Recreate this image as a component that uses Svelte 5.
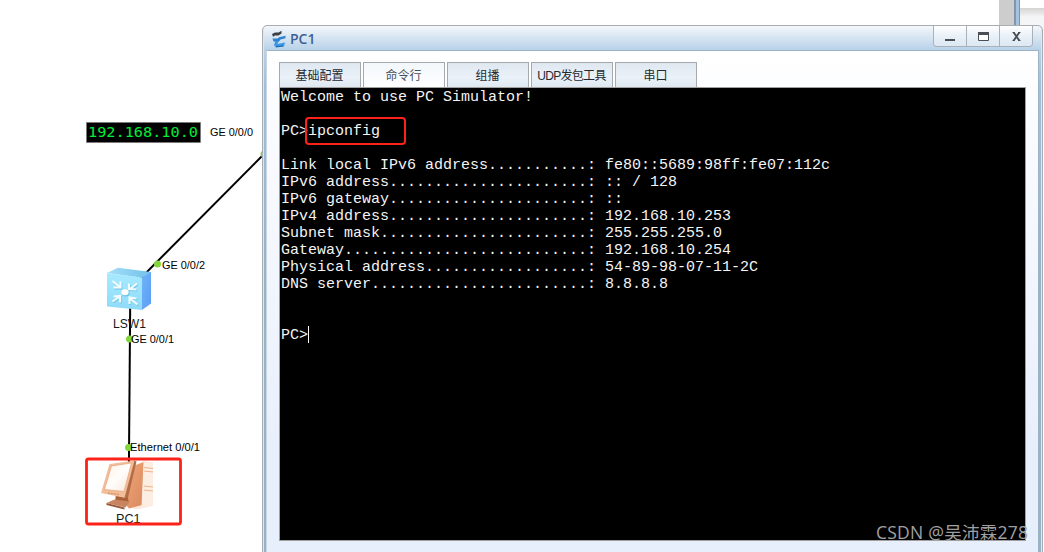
<script>
  const tabs = ['基础配置', '命令行', '组播', 'UDP发包工具', '串口']
  let active = 1

  const info = [
    ['Link local IPv6 address', 'fe80::5689:98ff:fe07:112c'],
    ['IPv6 address', ':: / 128'],
    ['IPv6 gateway', '::'],
    ['IPv4 address', '192.168.10.253'],
    ['Subnet mask', '255.255.255.0'],
    ['Gateway', '192.168.10.254'],
    ['Physical address', '54-89-98-07-11-2C'],
    ['DNS server', '8.8.8.8'],
  ]

  const ports = [
    { name: 'GE 0/0/0', x: 210, y: 136, w: 43, dot: [264, 154] },
    { name: 'GE 0/0/2', x: 162, y: 269, w: 43, dot: [157.5, 264] },
    { name: 'GE 0/0/1', x: 131, y: 343, w: 43, dot: [129.5, 339] },
    { name: 'Ethernet 0/0/1', x: 130, y: 451, w: 70, dot: [128.5, 447.5] },
  ]

  const arrows = 'M112.500 281l7.500 6M120.500 281.500v6h-7M137 283.500l-7 5.500M129 283.500v5.500l7.500.5M112.500 301.500l7-5M113.500 296.500l6.500-.500v6.500M137.500 304.500l-7.500-6M129.500 304v-6.500l7 1'

  const line = ([label, value]) => label.padEnd(34, '.') + ': ' + value
</script>

<div class="desktop">
  <svg class="topology" width="1044" height="552" viewBox="0 0 1044 552">
    <defs>
      <linearGradient id="front" x1="0" y1="0" x2="0" y2="1">
        <stop offset="0" stop-color="#a8eaff" />
        <stop offset="1" stop-color="#8edbf8" />
      </linearGradient>
      <linearGradient id="top" x1="0" y1="0" x2="1" y2="0">
        <stop offset="0" stop-color="#a5dff8" />
        <stop offset="1" stop-color="#6fc1ea" />
      </linearGradient>
      <linearGradient id="side" x1="0" y1="0" x2="1" y2="1">
        <stop offset="0" stop-color="#70b4f5" />
        <stop offset="1" stop-color="#5a9cf8" />
      </linearGradient>
      <linearGradient id="screen" x1="0" y1="0" x2="1" y2="1">
        <stop offset="0" stop-color="#fff1e5" />
        <stop offset=".5" stop-color="#fffdfb" />
        <stop offset="1" stop-color="#f8e6d8" />
      </linearGradient>
      <linearGradient id="tower" x1="0" y1="0" x2="1" y2="1">
        <stop offset="0" stop-color="#f0a678" />
        <stop offset="1" stop-color="#d98a5e" />
      </linearGradient>
    </defs>

    <g stroke="#000" stroke-width="2">
      <path d="M264 154 128 291" />
      <path d="M130.3 291 128.8 480" />
    </g>

    <!-- switch -->
    <g>
      <path d="m107 273 11-5.300 33 4.200-9 5.800z" fill="url(#top)" />
      <path d="m142 277.500 9-5.800v31.800l-9 6.500z" fill="url(#side)" />
      <path d="m107 273 35 4.600V310l-35-3.500z" fill="url(#front)" />
      <ellipse cx="125.800" cy="293.300" rx="3.800" ry="3.200" fill="#6fc3e4" />
      <ellipse cx="125" cy="292.300" rx="3.600" ry="3" fill="#fff" />
      <path d={arrows} fill="none" stroke="#72c5e6" stroke-width="2" transform="translate(.8 1)" />
      <path d={arrows} fill="none" stroke="#f2fcff" stroke-width="2.100" />
    </g>

    <!-- workstation -->
    <g>
      <path d="m134 466 10-5 9 1.500v43l-16 4-10-3z" fill="#fbe8da" />
      <path d="m133 466 11-4-2 43-13 3.500-5-6z" fill="url(#tower)" />
      <path d="m143.500 462-2 45.500 11.500-3v-41z" fill="#fdeee3" />
      <path d="m144 467.500 9 1m-9 2.500 9 1m-9 14 9 1m-9 3 9 1" stroke="#efb28b" stroke-width="1.200" />
      <path d="m116 493.500 11 .5 2 9-14 0z" fill="#a9613a" />
      <path d="m106.500 503 8-3.500 15 2-4 6z" fill="#c98560" />
      <path d="m106.500 503 18 4.500v2l-18-4.500z" fill="#99583a" />
      <path d="m109.500 464 25.500-3.500-9.500 37.500-24.500-5z" fill="#f2bd99" />
      <path d="m134.500 460.500 2 1-8.500 36-3.500 .5z" fill="#b46c45" />
      <path d="m111.500 466 20-3-7.500 28.500-19.500-2z" fill="url(#screen)" stroke="#e4a37c" stroke-width=".7" />
      <path d="m108 493 11 1.500" stroke="#d4875a" stroke-dasharray="2 1" />
    </g>

    {#each ports as p}
      <circle cx={p.dot[0]} cy={p.dot[1]} r="3.500" fill="#83d63b" />
      <text class="port" x={p.x} y={p.y} textLength={p.w} lengthAdjust="spacingAndGlyphs">{p.name}</text>
    {/each}

    <text class="node" x="113" y="328" textLength="33" lengthAdjust="spacingAndGlyphs">LSW1</text>
    <text class="node" x="116" y="523" textLength="24.500" lengthAdjust="spacingAndGlyphs">PC1</text>

    <rect x="86.500" y="459" width="94" height="65" rx="2" fill="none" stroke="#fc2318" stroke-width="2.800" />

    <rect x="86.500" y="122.500" width="114" height="20" fill="#000" stroke="#777" stroke-width=".6" />
    <text class="subnet" x="88" y="137" textLength="110" lengthAdjust="spacingAndGlyphs">192.168.10.0</text>
  </svg>

  <div class="behind">
    <div class="strip"></div>
    <div class="edge"></div>
    <div class="pane"></div>
  </div>

  <div class="window">
    <div class="titlebar">
      <svg class="logo" width="16" height="18" viewBox="0 0 16 18">
        <path d="m1 4 3-1.500h3.500L10.500.8v2.700L7.500 5.500H4L2 6.800z" fill="#3d4144" />
        <path d="M1.500 8.500h5L8 7.200l6.500-1.500v2.600L9.500 9.600 7.500 12l-5-.6z" fill="#2d83d0" />
        <path d="m4.500 11 3 .6-1 2.400 7.500-1.400-1 3.800-8 1.200L3 15z" fill="#3a97e4" />
        <path d="m5 16.800 7-.9" stroke="#1967b4" />
      </svg>
      <span class="title">PC1</span>
      <div class="controls">
        <button aria-label="minimize"><svg width="32" height="20"><path d="M11 14h10" stroke="#4b4e54" stroke-width="2" /></svg></button>
        <button aria-label="maximize"><svg width="32" height="20"><path d="M11.500 6.500h10v8h-10z" fill="#fff" stroke="#4b4e54" /><path d="M11 7.500h11" stroke="#4b4e54" stroke-width="3" /></svg></button>
        <button aria-label="close"><svg width="32" height="20"><path d="m13.700 6.500 5.600 8m0-8-5.600 8" stroke="#4b4e54" stroke-width="1.900" /><path d="M12.500 6.500h2.500m3 0h2.500m-8 8h2.500m3 0h2.500" stroke="#4b4e54" /></svg></button>
      </div>
    </div>

    <div class="content">
      <div class="tabs">
        {#each tabs as tab, i}
          <button class="tab" class:active={active === i} on:click={() => active = i}>{tab}</button>
        {/each}
      </div>
      <div class="terminal">
        <pre>Welcome to use PC Simulator!

PC&gt;<span class="command">ipconfig</span>

{info.map(line).join('\n')}


PC&gt;<span class="cursor"></span></pre>
      </div>
    </div>
  </div>

  <div class="watermark">CSDN @吴沛霖278</div>
</div>

<style>
  :global(body) { background: #fff; overflow: hidden; }
  .desktop { position: relative; width: 1044px; height: 552px; overflow: hidden; background: #fff; font-family: "Liberation Sans", "Noto Sans CJK SC", sans-serif; }
  .topology { position: absolute; left: 0; top: 0; }
  .port { font-size: 11.500px; fill: #000; }
  .node { font-size: 13px; fill: #16161c; }
  .subnet { font-family: "DejaVu Sans Mono", monospace; font-size: 14px; fill: #00ee38; }

  .behind { position: absolute; left: 999px; top: 0; display: flex; width: 45px; height: 60px; }
  .strip { width: 15px; background: #cdcdcd; }
  .edge { width: 3px; background: #a5c3df; border-left: 2px solid #8196aa; border-right: 1px solid #8196aa; }
  .pane { flex: 1; margin-top: 8px; background: linear-gradient(#d4d4d4, #f4f5f7 9px); }

  .window { position: absolute; left: 262px; top: 25px; box-sizing: border-box; width: 781px; height: 560px; border: 1px solid #a8adb2; border-radius: 5px 5px 0 0; background: linear-gradient(#f3f7fb, #b8d1e8 24px, #9ebfdc 60px, #97b3ca 250px); box-shadow: inset 1px 0 #dce7f0, inset -1px 0 #dce7f0; padding: 0 3px; }
  .titlebar { display: flex; align-items: center; height: 24px; padding-left: 5px; }
  .logo { margin-top: 1px; }
  .title { margin-left: 3px; margin-top: 1px; flex: 1; font-family: "Open Sans", sans-serif; font-size: 14px; font-weight: 600; color: #405f93; }
  .controls { align-self: flex-start; display: flex; margin-right: 6px; border: 1px solid #a8b0b9; border-top: none; border-radius: 0 0 4px 4px; overflow: hidden; }
  .controls button { height: 20px; padding: 0; border: none; background: linear-gradient(#fff, #e9f0f8 10px, #dce8f3); display: block; }
  .controls button + button { border-left: 1px solid #a8b0b9; }
  .controls svg { display: block; }

  .content { box-sizing: border-box; height: 535px; border: 1px solid #9eb3c6; border-left-color: #c9d7e3; padding: 11px 12px; background: linear-gradient(#fff, #fbfcff 60px, #e8effc 400px); }
  .tabs { display: flex; gap: 2px; height: 25px; }
  .tab { box-sizing: border-box; width: 82px; padding: 0 1px 2px 0; border: 1px solid #a6a9ae; border-bottom: none; background: linear-gradient(#dfe7f0, #eaf1f8 60%, #dfe8f1); font: 12px "Liberation Sans", "Noto Sans CJK SC", sans-serif; color: #252a31; text-align: center; white-space: nowrap; }
  .tab:nth-child(4) { letter-spacing: -.7px; }
  .tab.active { background: linear-gradient(#f2f7fb, #fff); color: #43505f; }
  .terminal { box-sizing: border-box; width: 747px; height: 454px; border: 1px solid #a0a0a0; background: #000; padding: 1px; }
  pre { margin: 0; font: 15px/17px "Liberation Mono", monospace; color: #f4f4f4; }
  .command { outline: 2.500px solid #fb2318; display: inline-block; box-sizing: border-box; width: 97px; height: 24px; line-height: 26px; margin: -4px 0 -3px -1px; padding-left: 1px; vertical-align: middle; border-radius: 2px; }
  .cursor { display: inline-block; width: 1px; height: 17px; background: #fff; vertical-align: middle; margin-top: -2px; }

  .watermark { position: absolute; left: 876px; top: 520px; font: 17.5px/24px "Open Sans", "Noto Sans CJK SC", sans-serif; letter-spacing: .25px; color: #a0a0a2; white-space: nowrap; }
</style>
